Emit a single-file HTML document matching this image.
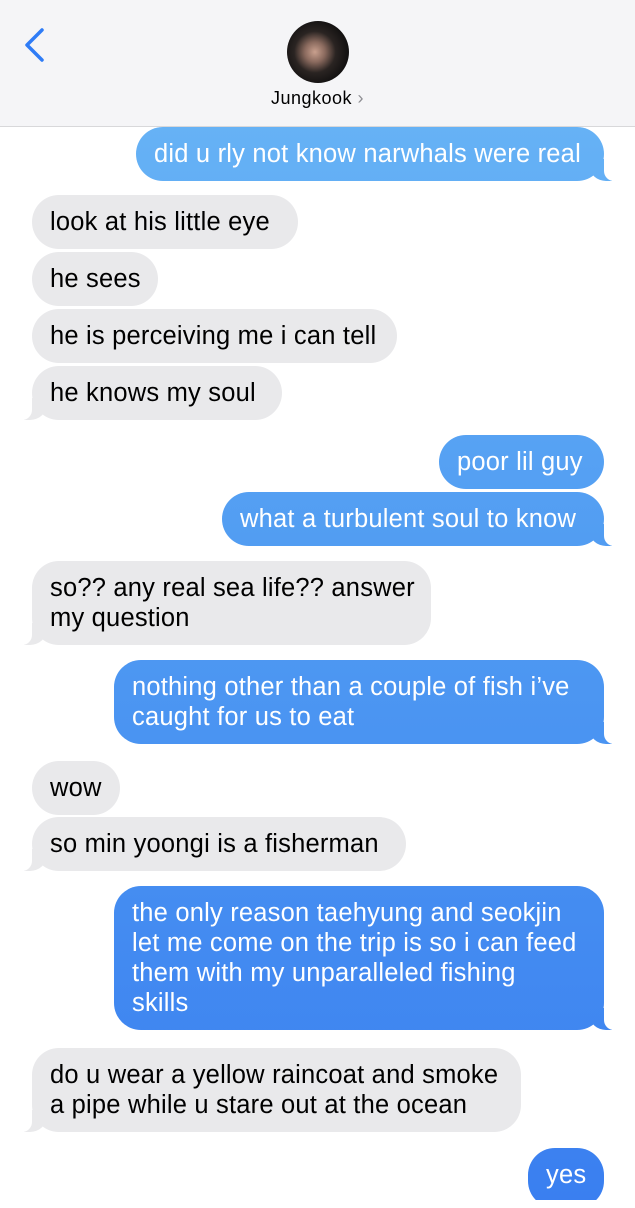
<!DOCTYPE html>
<html><head><meta charset="utf-8"><style>
*{margin:0;padding:0;box-sizing:border-box}
body{width:635px;height:1200px;overflow:hidden;background:#fff;font-family:"Liberation Sans",Arial,sans-serif;position:relative}
.hdr{position:absolute;left:0;top:0;width:635px;height:127px;background:#f5f5f7;border-bottom:1px solid #d8d8da;z-index:5}
.av{position:absolute;left:287px;top:21px;width:62px;height:62px;border-radius:50%;background:radial-gradient(circle at 45% 50%,#c9a08e 0,#8a6a5e 22%,#2a2422 45%,#141212 70%)}
.name{position:absolute;left:0;width:635px;top:88px;text-align:center;font-size:18px;letter-spacing:0.5px;color:#000}
.name span{color:#8e8e93}
.b{position:absolute;font-size:25.5px;line-height:30px;padding:12px 18px;border-radius:27px;white-space:nowrap;letter-spacing:0.2px}
.r{background:#e9e9eb;color:#000}
.s{color:#fff;background:linear-gradient(180deg,#6cb8f6 0px,#4f9af2 600px,#3a7ff0 1200px);background-attachment:fixed}
.t::before,.t::after{content:"";position:absolute;bottom:0;height:22px}
.s.t::before{right:-8px;width:22px;background:inherit;background-attachment:fixed;border-bottom-left-radius:16px 14px;z-index:-1}
.s.t::after{right:-14px;width:14px;background:#fff;border-bottom-left-radius:10px;z-index:-1}
.r.t::before{left:-8px;width:22px;background:#e9e9eb;border-bottom-right-radius:16px 14px;z-index:-1}
.r.t::after{left:-14px;width:14px;background:#fff;border-bottom-right-radius:10px;z-index:-1}
.b{z-index:1}
</style></head><body>
<div class="hdr">
<svg style="position:absolute;left:22px;top:27px" width="26" height="38" viewBox="0 0 26 38"><path d="M20 3 L5 18 L20 33" fill="none" stroke="#2f7cf6" stroke-width="3.5" stroke-linecap="round" stroke-linejoin="round"/></svg>
<div class="av"></div>
<div class="name">Jungkook <span>›</span></div>
</div>
<div class="b s t" style="left:136px;top:127px;width:468px">did u rly not know narwhals were real</div>
<div class="b r" style="left:32px;top:195px;width:266px">look at his little eye</div>
<div class="b r" style="left:32px;top:252px;width:126px">he sees</div>
<div class="b r" style="left:32px;top:309px;width:365px">he is perceiving me i can tell</div>
<div class="b r t" style="left:32px;top:366px;width:250px">he knows my soul</div>
<div class="b s" style="left:439px;top:435px;width:165px">poor lil guy</div>
<div class="b s t" style="left:222px;top:492px;width:382px">what a turbulent soul to know</div>
<div class="b r t" style="left:32px;top:561px;width:399px">so?? any real sea life?? answer<br>my question</div>
<div class="b s t" style="left:114px;top:660px;width:490px">nothing other than a couple of fish i’ve<br>caught for us to eat</div>
<div class="b r" style="left:32px;top:761px;width:88px">wow</div>
<div class="b r t" style="left:32px;top:817px;width:374px">so min yoongi is a fisherman</div>
<div class="b s t" style="left:114px;top:886px;width:490px">the only reason taehyung and seokjin<br>let me come on the trip is so i can feed<br>them with my unparalleled fishing<br>skills</div>
<div class="b r t" style="left:32px;top:1048px;width:489px">do u wear a yellow raincoat and smoke<br>a pipe while u stare out at the ocean</div>
<div class="b s" style="left:528px;top:1148px;width:76px;height:60px">yes</div>
</body></html>
